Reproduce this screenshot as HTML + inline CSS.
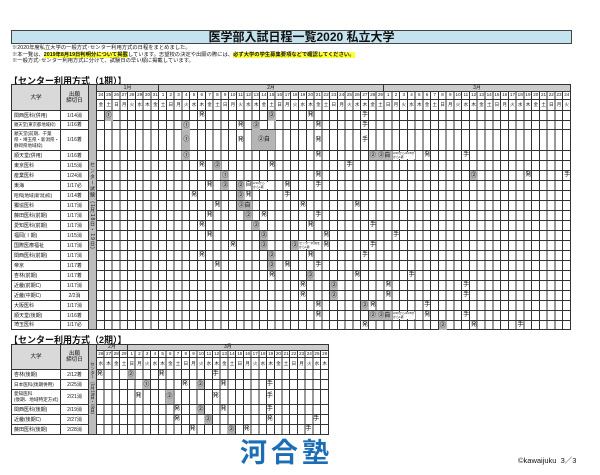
<!DOCTYPE html>
<html><head><meta charset="utf-8"><style>
*{margin:0;padding:0;box-sizing:border-box}
body{width:600px;height:475px;background:#fff;position:relative;overflow:hidden;font-family:"Liberation Sans","Noto Sans CJK JP",sans-serif;color:#111}
.a{position:absolute}
.title{left:11px;top:30px;width:561px;height:14px;background:#c5e3ee;border:1px solid #444;text-align:center;font-weight:bold;font-size:12px;line-height:12px;padding-left:20px}
.note{left:12px;font-size:5.3px;line-height:6px;white-space:nowrap}
.hl{background:#ffff33;font-weight:bold}
.sec{left:9px;font-size:9px;font-weight:bold;line-height:10px}
.grid{background:repeating-linear-gradient(to right,transparent 0 6.77px,#333 6.77px 7.77px);border-left:1px solid #333}
.grid2{background:repeating-linear-gradient(to right,transparent 0 6.73px,#333 6.73px 7.73px);border-left:1px solid #333}
.hr{height:1px;background:#333}
.row{display:flex;font-size:4.6px;line-height:8px;white-space:nowrap}
.row span{width:7.77px;text-align:center;flex:none}
.r2 span{width:7.73px}
.cell{border:1px solid #333;font-size:5px;display:flex;align-items:center;padding-left:2px;line-height:6px;background:#fff}
.dc{justify-content:center;padding:0}
.gh{background:#d9d9d9;justify-content:center;padding:0;font-size:5.5px;text-align:center}
.mo{background:#ccc;font-size:5px;text-align:center;line-height:7px;border-right:1px solid #333}
.m{position:absolute;width:7.77px;height:10px;text-align:center;font-size:6px;line-height:10px}
.t1 .m{left:calc(97px + var(--c)*7.77px);top:calc(var(--r)*1px)}
.t2 .m{width:7.73px;left:calc(96px + var(--c)*7.73px);top:calc(var(--r)*1px)}
.g{background:#b5b5b5}
.nt{position:absolute;font-size:3px;line-height:3.5px;background:#fff;white-space:nowrap;overflow:hidden}
.vt{writing-mode:vertical-rl;font-size:5px;background:#bdbdbd;border:1px solid #333;display:flex;align-items:center;justify-content:center;letter-spacing:1px}
</style></head><body>
<div class="a title">医学部入試日程一覧2020 私立大学</div>
<div class="a note" style="top:45px">※2020年度私立大学の一般方式･センター利用方式の日程をまとめました。</div>
<div class="a note" style="top:51.5px">※本一覧は、<span class="hl">2019年8月19日判明分について掲載</span>しています。志望校の決定や出願の際には、<span class="hl">必ず大学の学生募集要項などで確認してください。</span></div>
<div class="a note" style="top:58px">※一般方式･センター利用方式に分けて、試験日の早い順に掲載しています。</div>
<div class="a sec" style="top:76px">【センター利用方式（1期）】</div>

<div class="t1">
<div class="a cell gh" style="left:11px;top:84px;width:50px;height:27px">大学</div>
<div class="a cell gh" style="left:60px;top:84px;width:29px;height:27px">出願<br>締切日</div>
<div class="a vt" style="left:88px;top:84px;width:9px;height:246px">センター試験（1月18日・19日）</div>
<div class="a grid" style="left:96px;top:84px;width:475px;height:246px;border-right:1px solid #333;border-bottom:1px solid #333"></div>
<div class="a mo" style="left:97px;top:84px;width:62px;height:7px;border-top:1px solid #333">1月</div>
<div class="a mo" style="left:159px;top:84px;width:225px;height:7px;border-top:1px solid #333">2月</div>
<div class="a mo" style="left:384px;top:84px;width:187px;height:7px;border-top:1px solid #333">3月</div>
<div class="a hr" style="left:96px;top:91px;width:475px"></div>
<div class="a row" style="left:97px;top:91px;background:#fff0"><span>24</span><span>25</span><span>26</span><span>27</span><span>28</span><span>29</span><span>30</span><span>31</span><span>1</span><span>2</span><span>3</span><span>4</span><span>5</span><span>6</span><span>7</span><span>8</span><span>9</span><span>10</span><span>11</span><span>12</span><span>13</span><span>14</span><span>15</span><span>16</span><span>17</span><span>18</span><span>19</span><span>20</span><span>21</span><span>22</span><span>23</span><span>24</span><span>25</span><span>26</span><span>27</span><span>28</span><span>29</span><span>1</span><span>2</span><span>3</span><span>4</span><span>5</span><span>6</span><span>7</span><span>8</span><span>9</span><span>10</span><span>11</span><span>12</span><span>13</span><span>14</span><span>15</span><span>16</span><span>17</span><span>18</span><span>19</span><span>20</span><span>21</span><span>22</span><span>23</span><span>24</span></div>
<div class="a hr" style="left:96px;top:99px;width:475px"></div>
<div class="a row" style="left:97px;top:100px;line-height:10px"><span>金</span><span>土</span><span>日</span><span>月</span><span>火</span><span>水</span><span>木</span><span>金</span><span>土</span><span>日</span><span>月</span><span>火</span><span>水</span><span>木</span><span>金</span><span>土</span><span>日</span><span>月</span><span>火</span><span>水</span><span>木</span><span>金</span><span>土</span><span>日</span><span>月</span><span>火</span><span>水</span><span>木</span><span>金</span><span>土</span><span>日</span><span>月</span><span>火</span><span>水</span><span>木</span><span>金</span><span>土</span><span>日</span><span>月</span><span>火</span><span>水</span><span>木</span><span>金</span><span>土</span><span>日</span><span>月</span><span>火</span><span>水</span><span>木</span><span>金</span><span>土</span><span>日</span><span>月</span><span>火</span><span>水</span><span>木</span><span>金</span><span>土</span><span>日</span><span>月</span><span>火</span></div>
<!-- rows -->
<div class="a hr" style="left:96px;top:110px;width:475px"></div>
<div class="a hr" style="left:96px;top:120px;width:475px"></div>
<div class="a hr" style="left:96px;top:129px;width:475px"></div>
<div class="a hr" style="left:96px;top:150px;width:475px"></div>
<div class="a hr" style="left:96px;top:160px;width:475px"></div>
<div class="a hr" style="left:96px;top:170px;width:475px"></div>
<div class="a hr" style="left:96px;top:180px;width:475px"></div>
<div class="a hr" style="left:96px;top:190px;width:475px"></div>
<div class="a hr" style="left:96px;top:200px;width:475px"></div>
<div class="a hr" style="left:96px;top:210px;width:475px"></div>
<div class="a hr" style="left:96px;top:220px;width:475px"></div>
<div class="a hr" style="left:96px;top:230px;width:475px"></div>
<div class="a hr" style="left:96px;top:240px;width:475px"></div>
<div class="a hr" style="left:96px;top:250px;width:475px"></div>
<div class="a hr" style="left:96px;top:260px;width:475px"></div>
<div class="a hr" style="left:96px;top:270px;width:475px"></div>
<div class="a hr" style="left:96px;top:280px;width:475px"></div>
<div class="a hr" style="left:96px;top:290px;width:475px"></div>
<div class="a hr" style="left:96px;top:300px;width:475px"></div>
<div class="a hr" style="left:96px;top:310px;width:475px"></div>
<div class="a hr" style="left:96px;top:320px;width:475px"></div>

<div class="a cell" style="left:11px;top:110px;width:50px;height:11px">関西医科(併用)</div><div class="a cell dc" style="left:60px;top:110px;width:29px;height:11px">1/14消</div>
<div class="a cell" style="left:11px;top:120px;width:50px;height:10px;font-size:4.3px">順天堂(東京都地域枠)</div><div class="a cell dc" style="left:60px;top:120px;width:29px;height:10px">1/16着</div>
<div class="a cell" style="left:11px;top:129px;width:50px;height:22px;font-size:4.5px">順天堂(前期、千葉県・埼玉県・新潟県・静岡県地域枠)</div><div class="a cell dc" style="left:60px;top:129px;width:29px;height:22px">1/16着</div>
<div class="a cell" style="left:11px;top:150px;width:50px;height:11px">順天堂(併用)</div><div class="a cell dc" style="left:60px;top:150px;width:29px;height:11px">1/16着</div>
<div class="a cell" style="left:11px;top:160px;width:50px;height:11px">東京医科</div><div class="a cell dc" style="left:60px;top:160px;width:29px;height:11px">1/15消</div>
<div class="a cell" style="left:11px;top:170px;width:50px;height:11px">産業医科</div><div class="a cell dc" style="left:60px;top:170px;width:29px;height:11px">1/24消</div>
<div class="a cell" style="left:11px;top:180px;width:50px;height:11px">東海</div><div class="a cell dc" style="left:60px;top:180px;width:29px;height:11px">1/17必</div>
<div class="a cell" style="left:11px;top:190px;width:50px;height:11px;font-size:4.6px">昭和[地域(新潟)枠]</div><div class="a cell dc" style="left:60px;top:190px;width:29px;height:11px">1/14着</div>
<div class="a cell" style="left:11px;top:200px;width:50px;height:11px">獨協医科</div><div class="a cell dc" style="left:60px;top:200px;width:29px;height:11px">1/17消</div>
<div class="a cell" style="left:11px;top:210px;width:50px;height:11px">藤田医科(前期)</div><div class="a cell dc" style="left:60px;top:210px;width:29px;height:11px">1/17消</div>
<div class="a cell" style="left:11px;top:220px;width:50px;height:11px">愛知医科(前期)</div><div class="a cell dc" style="left:60px;top:220px;width:29px;height:11px">1/17消</div>
<div class="a cell" style="left:11px;top:230px;width:50px;height:11px">福岡(Ⅰ期)</div><div class="a cell dc" style="left:60px;top:230px;width:29px;height:11px">1/15消</div>
<div class="a cell" style="left:11px;top:240px;width:50px;height:11px">国際医療福祉</div><div class="a cell dc" style="left:60px;top:240px;width:29px;height:11px">1/17消</div>
<div class="a cell" style="left:11px;top:250px;width:50px;height:11px">関西医科(前期)</div><div class="a cell dc" style="left:60px;top:250px;width:29px;height:11px">1/17消</div>
<div class="a cell" style="left:11px;top:260px;width:50px;height:11px">帝京</div><div class="a cell dc" style="left:60px;top:260px;width:29px;height:11px">1/17着</div>
<div class="a cell" style="left:11px;top:270px;width:50px;height:11px">杏林(前期)</div><div class="a cell dc" style="left:60px;top:270px;width:29px;height:11px">1/17着</div>
<div class="a cell" style="left:11px;top:280px;width:50px;height:11px">近畿(前期C)</div><div class="a cell dc" style="left:60px;top:280px;width:29px;height:11px">1/17消</div>
<div class="a cell" style="left:11px;top:290px;width:50px;height:11px">近畿(中期C)</div><div class="a cell dc" style="left:60px;top:290px;width:29px;height:11px">2/2消</div>
<div class="a cell" style="left:11px;top:300px;width:50px;height:11px">大阪医科</div><div class="a cell dc" style="left:60px;top:300px;width:29px;height:11px">1/17消</div>
<div class="a cell" style="left:11px;top:310px;width:50px;height:11px">順天堂(後期)</div><div class="a cell dc" style="left:60px;top:310px;width:29px;height:11px">1/16着</div>
<div class="a cell" style="left:11px;top:320px;width:50px;height:10px">埼玉医科</div><div class="a cell dc" style="left:60px;top:320px;width:29px;height:10px">1/17必</div>

<!-- marks t1 -->
<span class="m g" style="--c:1;--r:111">①</span><span class="m" style="--c:13;--r:110">発</span><span class="m g" style="--c:22;--r:111">②</span><span class="m" style="--c:27;--r:110">発</span><span class="m" style="--c:34;--r:110">手</span>
<span class="m g" style="--c:11;--r:121;height:9px">①</span><span class="m" style="--c:18;--r:120">発</span><span class="m g" style="--c:20;--r:121;height:9px">②</span><span class="m" style="--c:28;--r:120">発</span><span class="m" style="--c:34;--r:120">手</span>
<span class="m g" style="--c:11;--r:130;height:20px;line-height:20px">①</span><span class="m" style="--c:18;--r:130;line-height:20px">発</span><span class="m g" style="--c:20;--r:130;height:20px;line-height:20px;width:23px">②自</span><span class="m" style="--c:28;--r:130;line-height:20px">発</span><span class="m" style="--c:34;--r:130;line-height:20px">手</span>
<span class="m g" style="--c:11;--r:151;height:9px">①</span><span class="m" style="--c:28;--r:150">発</span><span class="m g" style="--c:35;--r:151;height:9px">②</span><span class="m g" style="--c:36;--r:151;height:9px;width:15px">②自</span><span class="nt" style="left:393px;top:152px;width:22px">2/26から/2/28から<br>から1着</span><span class="m" style="--c:42;--r:150">発</span><span class="m" style="--c:47;--r:150">手</span>
<span class="m" style="--c:13;--r:160">発</span><span class="m g" style="--c:15;--r:161;height:9px">②</span><span class="m" style="--c:22;--r:160">発</span><span class="m" style="--c:32;--r:160">手</span>
<span class="m g" style="--c:16;--r:171;height:9px">①</span><span class="m" style="--c:28;--r:170">発</span><span class="m g" style="--c:48;--r:171;height:9px">②</span><span class="m" style="--c:55;--r:170">発</span><span class="m" style="--c:60;--r:170">手</span>
<span class="m" style="--c:14;--r:180">発</span><span class="m g" style="--c:16;--r:181;height:9px">②</span><span class="m g" style="--c:18;--r:181;height:9px">②</span><span class="m" style="--c:19;--r:180">自</span><span class="nt" style="left:253px;top:182px;width:15px">2/16から<br>から1着</span><span class="m" style="--c:24;--r:180">発</span><span class="m" style="--c:28;--r:180">手</span>
<span class="m" style="--c:12;--r:190">発</span><span class="m g" style="--c:18;--r:191;height:9px">②</span><span class="m" style="--c:19;--r:190">発</span><span class="m" style="--c:24;--r:190">手</span>
<span class="m" style="--c:15;--r:200">発</span><span class="m g" style="--c:18;--r:201;height:9px;width:15px">②自</span><span class="m" style="--c:26;--r:200">発</span><span class="m" style="--c:33;--r:200">発</span>
<span class="m" style="--c:14;--r:210">発</span><span class="m g" style="--c:19;--r:211;height:9px">②</span><span class="m" style="--c:21;--r:210">発</span><span class="m" style="--c:28;--r:210">手</span>
<span class="m" style="--c:13;--r:220">発</span><span class="m g" style="--c:20;--r:221;height:9px">②</span><span class="m" style="--c:27;--r:220">発</span><span class="m" style="--c:35;--r:220">手</span>
<span class="m" style="--c:14;--r:230">発</span><span class="m g" style="--c:21;--r:231;height:9px">②</span><span class="m" style="--c:29;--r:230">発</span><span class="m" style="--c:38;--r:230">手</span>
<span class="m" style="--c:17;--r:240">発</span><span class="m g" style="--c:21;--r:241;height:9px">②</span><span class="m g" style="--c:25;--r:241;height:9px">②</span><span class="nt" style="left:299px;top:242px;width:22px">センター利用を<br>から1着</span><span class="m" style="--c:29;--r:240">発</span><span class="m" style="--c:35;--r:240">手</span>
<span class="m" style="--c:13;--r:250">発</span><span class="m g" style="--c:22;--r:251;height:9px">②</span><span class="m" style="--c:27;--r:250">発</span><span class="m" style="--c:34;--r:250">手</span>
<span class="m" style="--c:15;--r:260">発</span><span class="m g" style="--c:22;--r:261;height:9px">②</span><span class="m" style="--c:24;--r:260">発</span><span class="m" style="--c:28;--r:260">手</span>
<span class="m" style="--c:22;--r:270">発</span><span class="m g" style="--c:27;--r:271;height:9px">②</span><span class="m" style="--c:33;--r:270">発</span><span class="m" style="--c:40;--r:270">手</span>
<span class="m" style="--c:26;--r:280">発</span><span class="m g" style="--c:30;--r:281;height:9px">②</span><span class="m" style="--c:37;--r:280">発</span><span class="m" style="--c:47;--r:280">手</span>
<span class="m" style="--c:26;--r:290">発</span><span class="m g" style="--c:30;--r:291;height:9px">②</span><span class="m" style="--c:37;--r:290">発</span><span class="m" style="--c:47;--r:290">手</span>
<span class="m" style="--c:28;--r:300">発</span><span class="m g" style="--c:34;--r:301;height:9px">②</span><span class="m" style="--c:35;--r:300">発</span><span class="m" style="--c:42;--r:300">手</span>
<span class="m" style="--c:28;--r:310">発</span><span class="m g" style="--c:35;--r:311;height:9px">②</span><span class="m g" style="--c:36;--r:311;height:9px;width:15px">②自</span><span class="nt" style="left:393px;top:312px;width:22px">2/26から/2/28から<br>から1着</span><span class="m" style="--c:42;--r:310">発</span><span class="m" style="--c:47;--r:310">手</span>
<span class="m" style="--c:34;--r:320">発</span><span class="m g" style="--c:44;--r:321;height:9px">②</span><span class="m" style="--c:48;--r:320">発</span><span class="m" style="--c:54;--r:320">手</span>
</div>

<div class="a sec" style="top:335px">【センター利用方式（2期）】</div>
<div class="t2">
<div class="a cell gh" style="left:11px;top:344px;width:50px;height:26px">大学</div>
<div class="a cell gh" style="left:60px;top:344px;width:29px;height:26px">出願<br>締切日</div>
<div class="a vt" style="left:88px;top:344px;width:9px;height:91px;font-size:4.3px;letter-spacing:0">センター（1月18日・19日）</div>
<div class="a grid2" style="left:96px;top:344px;width:233px;height:91px;border-right:1px solid #333;border-bottom:1px solid #333"></div>
<div class="a mo" style="left:97px;top:344px;width:30.9px;height:6px;border-top:1px solid #333;line-height:5px">2月</div>
<div class="a mo" style="left:127.9px;top:344px;width:201px;height:6px;border-top:1px solid #333;line-height:5px">3月</div>
<div class="a hr" style="left:96px;top:350px;width:233px"></div>
<div class="a row r2" style="left:97px;top:350px;line-height:7px"><span>26</span><span>27</span><span>28</span><span>29</span><span>1</span><span>2</span><span>3</span><span>4</span><span>5</span><span>6</span><span>7</span><span>8</span><span>9</span><span>10</span><span>11</span><span>12</span><span>13</span><span>14</span><span>15</span><span>16</span><span>17</span><span>18</span><span>19</span><span>20</span><span>21</span><span>22</span><span>23</span><span>24</span><span>25</span><span>26</span></div>
<div class="a hr" style="left:96px;top:357px;width:233px"></div>
<div class="a row r2" style="left:97px;top:358px;line-height:11px"><span>水</span><span>木</span><span>金</span><span>土</span><span>日</span><span>月</span><span>火</span><span>水</span><span>木</span><span>金</span><span>土</span><span>日</span><span>月</span><span>火</span><span>水</span><span>木</span><span>金</span><span>土</span><span>日</span><span>月</span><span>火</span><span>水</span><span>木</span><span>金</span><span>土</span><span>日</span><span>月</span><span>火</span><span>水</span><span>木</span></div>
<div class="a hr" style="left:96px;top:369px;width:233px"></div>
<div class="a hr" style="left:96px;top:379px;width:233px"></div>
<div class="a hr" style="left:96px;top:389px;width:233px"></div>
<div class="a hr" style="left:96px;top:404px;width:233px"></div>
<div class="a hr" style="left:96px;top:414px;width:233px"></div>
<div class="a hr" style="left:96px;top:424px;width:233px"></div>

<div class="a cell" style="left:11px;top:369px;width:50px;height:11px">杏林(後期)</div><div class="a cell dc" style="left:60px;top:369px;width:29px;height:11px">2/12着</div>
<div class="a cell" style="left:11px;top:379px;width:50px;height:11px;font-size:4.6px">日本医科(後期併用)</div><div class="a cell dc" style="left:60px;top:379px;width:29px;height:11px">2/25消</div>
<div class="a cell" style="left:11px;top:389px;width:50px;height:16px;font-size:4.6px">愛知医科<br>(後期、地域特定方式)</div><div class="a cell dc" style="left:60px;top:389px;width:29px;height:16px">2/21消</div>
<div class="a cell" style="left:11px;top:404px;width:50px;height:11px">関西医科(後期)</div><div class="a cell dc" style="left:60px;top:404px;width:29px;height:11px">2/19消</div>
<div class="a cell" style="left:11px;top:414px;width:50px;height:11px">近畿(後期C)</div><div class="a cell dc" style="left:60px;top:414px;width:29px;height:11px">2/27消</div>
<div class="a cell" style="left:11px;top:424px;width:50px;height:11px">藤田医科(後期)</div><div class="a cell dc" style="left:60px;top:424px;width:29px;height:11px">2/28消</div>

<span class="m" style="--c:0;--r:369">発</span><span class="m g" style="--c:4;--r:370;height:9px">②</span><span class="m" style="--c:8;--r:369">発</span><span class="m" style="--c:15;--r:369">手</span>
<span class="m g" style="--c:6;--r:380;height:9px">①</span><span class="m" style="--c:11;--r:379">発</span><span class="m g" style="--c:13;--r:380;height:9px">②</span><span class="m" style="--c:16;--r:379">発</span><span class="m" style="--c:22;--r:379">手</span>
<span class="m" style="--c:5;--r:391">発</span><span class="m g" style="--c:9;--r:390;height:14px;line-height:14px">②</span><span class="m" style="--c:15;--r:391">発</span><span class="m" style="--c:22;--r:391">手</span>
<span class="m" style="--c:10;--r:404">発</span><span class="m g" style="--c:13;--r:405;height:9px">②</span><span class="m" style="--c:16;--r:404">発</span><span class="m" style="--c:22;--r:404">手</span>
<span class="m" style="--c:10;--r:414">発</span><span class="m g" style="--c:14;--r:415;height:9px">②</span><span class="m" style="--c:22;--r:414">発</span><span class="m" style="--c:28;--r:414">手</span>
<span class="m" style="--c:12;--r:424">発</span><span class="m g" style="--c:17;--r:425;height:9px">②</span><span class="m" style="--c:19;--r:424">発</span><span class="m" style="--c:27;--r:424">手</span>
</div>

<div class="a" style="left:240px;top:436px;font-size:27px;line-height:30px;font-weight:bold;color:#1b6db5;letter-spacing:4px;font-family:'Noto Sans CJK JP',sans-serif">河合塾</div>
<div class="a" style="left:518px;top:456px;font-size:7.5px;line-height:9px;white-space:nowrap">©kawaijuku&nbsp;&nbsp;3／3</div>
</body></html>
